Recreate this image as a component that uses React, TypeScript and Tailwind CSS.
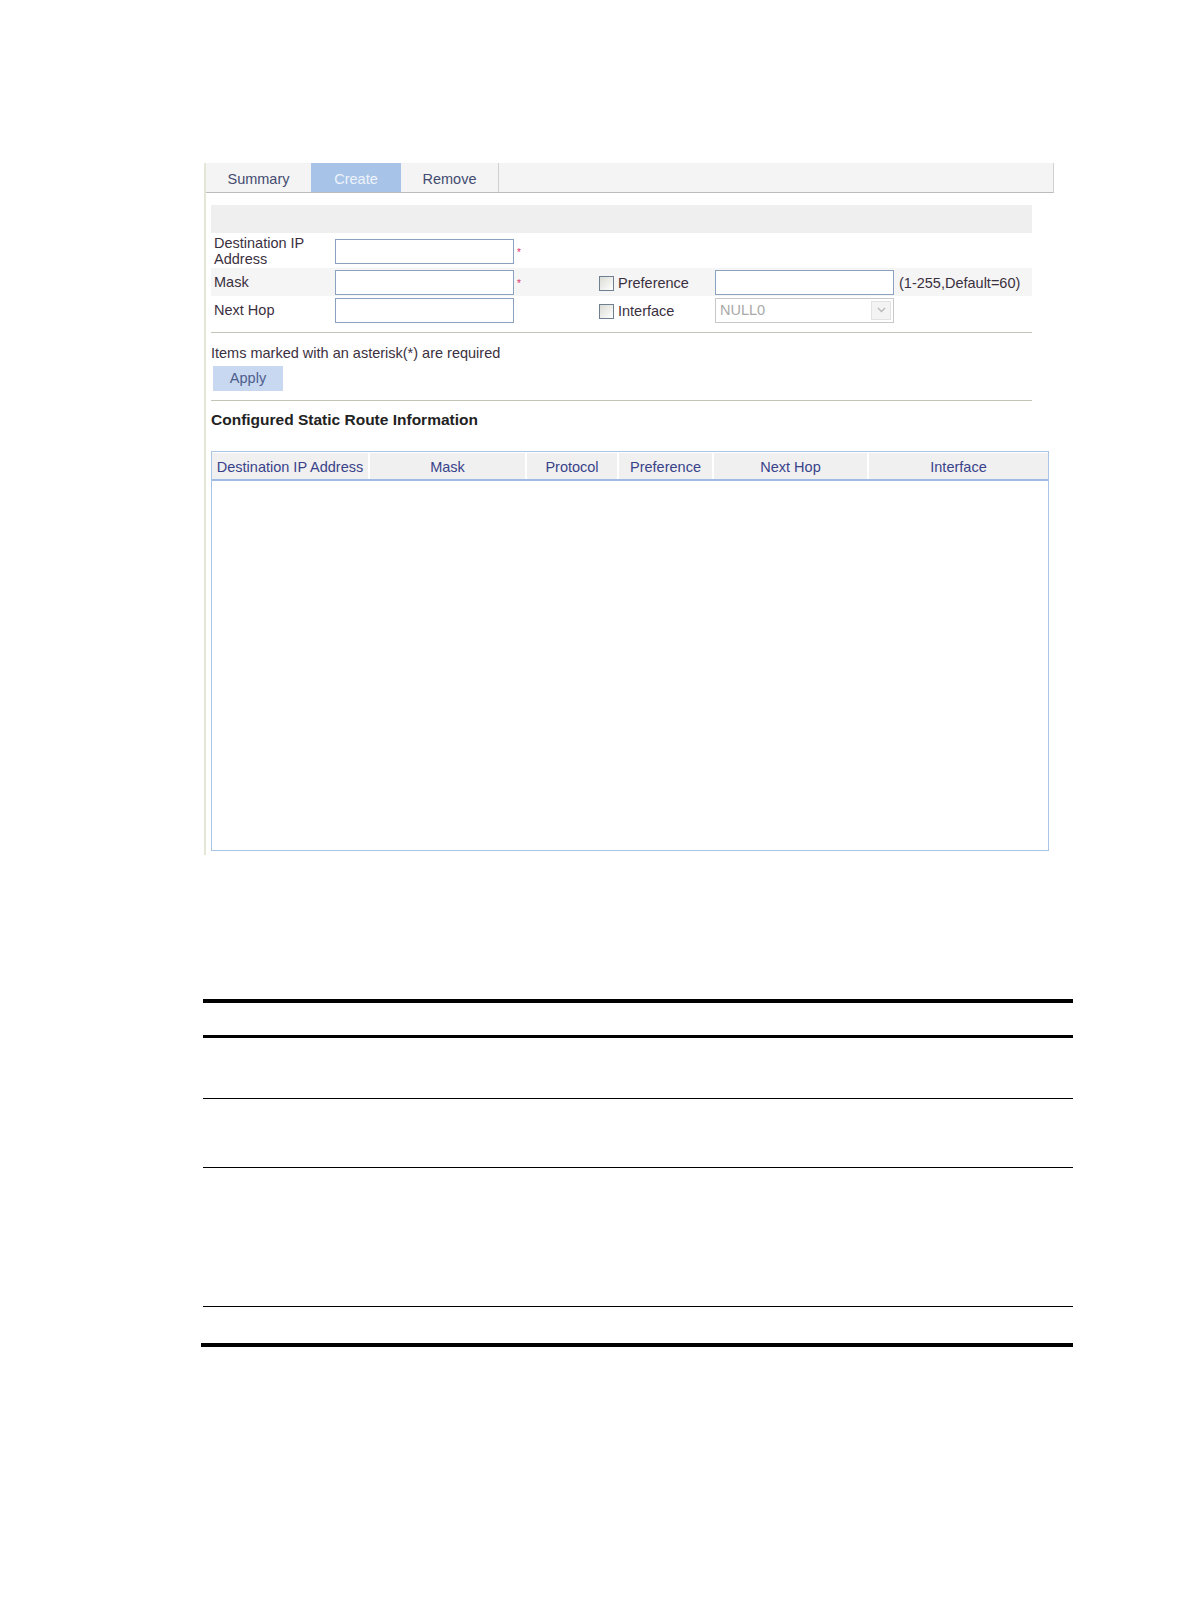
import React from 'react'

const labelText = 'text-[14.5px] leading-[16px] text-[#3b3040]'

function TextBox({ className = '' }: { className?: string }) {
  return <div className={`h-[25px] w-[179px] border border-[#8aa2bf] bg-white ${className}`} />
}

function Asterisk() {
  return <span className="ml-[3px] mt-[4px] text-[10px] leading-none text-[#e0306a]">*</span>
}

function CheckBox({ label }: { label: string }) {
  return (
    <label className="flex items-center gap-[4px]">
      <span className="block h-[15px] w-[15px] border border-[#6f7f90] bg-gradient-to-br from-[#dcdcd6] to-white" />
      <span className={labelText}>{label}</span>
    </label>
  )
}

const columns = [
  { title: 'Destination IP Address', width: 'w-[158px]' },
  { title: 'Mask', width: 'w-[157px]' },
  { title: 'Protocol', width: 'w-[92px]' },
  { title: 'Preference', width: 'w-[95px]' },
  { title: 'Next Hop', width: 'w-[155px]' },
  { title: 'Interface', width: 'flex-1' },
]

export default function App() {
  return (
    <div
      className="min-h-[1616px] w-[1190px] bg-white pt-[163px]"
      style={{ fontFamily: '"Liberation Sans", Arial, sans-serif' }}
    >
      {/* screenshot panel */}
      <div className="ml-[204px] h-[692px] w-[850px] border-l-2 border-[#e6e6d6]">
        <div className="flex h-[30px] border-b border-r border-b-[#bcbcbc] border-r-[#d0d0d0] bg-[#f4f4f4] text-[14.5px]">
          <div className="flex w-[105px] items-center justify-center pt-[5px] text-[#434c70]">Summary</div>
          <div className="flex w-[90px] items-center justify-center bg-[#a8c3e8] pt-[5px] text-[#eef3fb]">Create</div>
          <div className="flex w-[98px] items-center justify-center border-r border-[#cfcfcf] pt-[5px] text-[#434c70]">
            Remove
          </div>
        </div>

        <div className="pl-[5px]">
          <div className="mt-[12px] h-[28px] w-[821px] bg-[#efefef]" />

          {/* form */}
          <div className="mt-[1px] w-[821px]">
            <div className="flex h-[34px] items-center">
              <div className={`w-[124px] pl-[3px] ${labelText}`}>Destination IP Address</div>
              <div className="flex items-center">
                <TextBox />
                <Asterisk />
              </div>
            </div>
            <div className="flex h-[28px] items-center bg-[#f5f5f5]">
              <div className={`w-[124px] pl-[3px] ${labelText}`}>Mask</div>
              <div className="flex w-[264px] items-center">
                <TextBox />
                <Asterisk />
              </div>
              <div className="w-[116px] pt-[2px]">
                <CheckBox label="Preference" />
              </div>
              <TextBox />
              <span className={`ml-[5px] pt-[2px] ${labelText}`}>(1-255,Default=60)</span>
            </div>
            <div className="flex h-[28px] items-center">
              <div className={`w-[124px] pl-[3px] ${labelText}`}>Next Hop</div>
              <div className="w-[264px]">
                <TextBox />
              </div>
              <div className="w-[116px] pt-[2px]">
                <CheckBox label="Interface" />
              </div>
              <div className="flex h-[25px] w-[179px] items-center justify-between border border-[#c9c9c9] bg-white pl-[4px] pr-[2px]">
                <span className="pt-[2px] text-[14.5px] text-[#a9a9a9]">NULL0</span>
                <span className="flex h-[19px] w-[20px] items-center justify-center border border-[#e2e2e2] bg-[#f3f3f3]">
                  <svg width="9" height="6" viewBox="0 0 9 6">
                    <path d="M1 1l3.5 3.5L8 1" fill="none" stroke="#b8b8b8" strokeWidth="1.4" />
                  </svg>
                </span>
              </div>
            </div>
          </div>

          <div className="mt-[8px] w-[821px] border-t border-[#c4c4b6]" />
          <p className={`mt-[12px] ${labelText}`}>Items marked with an asterisk(*) are required</p>
          <button className="ml-[2px] mt-[5px] flex h-[25px] w-[70px] items-center justify-center bg-[#c7d8f0] text-[14.5px] text-[#4d5d8c]">
            Apply
          </button>
          <div className="mt-[9px] w-[821px] border-t border-[#c4c4b6]" />
          <h3 className="mt-[11px] text-[15.5px] font-bold leading-[16px] text-[#222]">
            Configured Static Route Information
          </h3>

          {/* route table */}
          <div className="mt-[23px] h-[400px] w-[838px] border border-[#aac4e6] bg-white">
            <div className="mt-[1px] flex h-[28px] border-b-2 border-[#9fbae3] bg-[#f0f0f0]">
              {columns.map((c, i) => (
                <div
                  key={c.title}
                  className={`flex items-center justify-center pt-[4px] text-[14.5px] text-[#39438a] ${c.width} ${
                    i < columns.length - 1 ? 'border-r-2 border-white' : ''
                  }`}
                >
                  {c.title}
                </div>
              ))}
            </div>
          </div>
        </div>
      </div>

      {/* document table rules */}
      <div className="ml-[203px] mt-[144px] w-[870px]">
        <div className="h-[4px] bg-black" />
        <div className="mt-[32px] h-[3px] bg-black" />
        <div className="mt-[60px] h-px bg-black" />
        <div className="mt-[68px] h-px bg-black" />
        <div className="mt-[138px] h-px bg-black" />
      </div>
      <div className="ml-[201px] mt-[36px] h-[4px] w-[872px] bg-black" />
    </div>
  )
}
